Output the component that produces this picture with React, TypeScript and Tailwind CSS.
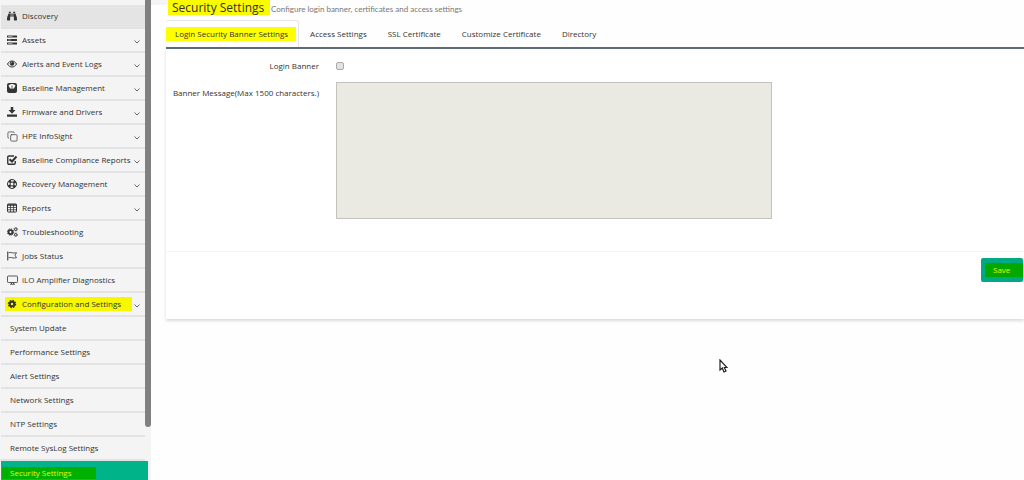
import { useState, type ReactNode } from "react";
import { FaBinoculars } from "react-icons/fa";
import { Copy } from "lucide-react";

type NavItem = {
  label: string;
  icon: ReactNode;
  expandable?: boolean;
};

function Icon({ children }: { children: ReactNode }) {
  return (
    <svg viewBox="0 0 20 20" width="10" height="10" fill="none" stroke="currentColor" strokeWidth="2" aria-hidden="true">
      {children}
    </svg>
  );
}

const icons = {
  server: (
    <Icon>
      <path d="M0 3h20M0 10h20M0 17h20" strokeWidth="4" />
      <path d="M2 3h9M2 10h6M2 17h9" stroke="#bbb" strokeWidth="1.5" />
    </Icon>
  ),
  eye: (
    <Icon>
      <path d="M1 10c4-8 14-8 18 0-4 8-14 8-18 0z" />
      <circle cx="10" cy="9" r="4.500" fill="currentColor" stroke="none" />
      <path d="M7.500 9c0-1.500 1-2.500 2.500-2.500" stroke="#ddd" strokeWidth="1.200" />
    </Icon>
  ),
  scale: (
    <Icon>
      <rect x="0" y="0" width="20" height="20" rx="4" fill="currentColor" stroke="none" />
      <path d="M3 5c4-4 10-4 14 0l-3 6H6z" fill="#f4f4f4" stroke="none" />
      <path d="M10 10V5" strokeWidth="1.500" />
    </Icon>
  ),
  download: (
    <Icon>
      <path d="M7.500 0h5v6h4.500l-7 7.500L3 6h4.500zM0 15h20v4.500H0z" fill="currentColor" stroke="none" />
    </Icon>
  ),
  check: (
    <Icon>
      <path d="M16.500 12v4q0 2.500-2.500 2.500H4Q1.500 18.500 1.500 16V4.500Q1.500 2 4 2h10" strokeWidth="2.800" />
      <path d="M5 8.500l5 4.500 9-10" strokeWidth="4" />
    </Icon>
  ),
  ring: (
    <Icon>
      <circle cx="10" cy="10" r="9" />
      <circle cx="10" cy="10" r="4" />
      <circle cx="10" cy="10" r="6.500" strokeWidth="5" strokeDasharray="5.200 5" strokeDashoffset="-2.500" />
    </Icon>
  ),
  table: (
    <Icon>
      <rect x="1" y="2" width="18" height="16" rx="1.500" />
      <path d="M1 4h18" strokeWidth="3" />
      <path d="M1 9h18M1 13.500h18M7 3v15M13 3v15" strokeWidth="1.500" />
    </Icon>
  ),
  cogs: (
    <svg viewBox="0 0 22 20" width="11" height="10" fill="none" stroke="currentColor" aria-hidden="true">
      <circle cx="7" cy="10" r="4" strokeWidth="3.500" />
      <circle cx="7" cy="10" r="6.300" strokeWidth="2" strokeDasharray="2.700 2.250" />
      <circle cx="17.500" cy="4.500" r="2.500" strokeWidth="2" />
      <circle cx="17.500" cy="4.500" r="4" strokeWidth="1" strokeDasharray="2 2.190" />
      <circle cx="17.500" cy="15.500" r="2.500" strokeWidth="2" />
      <circle cx="17.500" cy="15.500" r="4" strokeWidth="1" strokeDasharray="2 2.190" />
    </svg>
  ),
  flag: (
    <Icon>
      <path d="M1.500 1v18" />
      <path d="M3 3.500c5-2 8 2 16 0l-3 5 3 5c-8 2-11-2-16 0" strokeWidth="1.600" />
    </Icon>
  ),
  monitor: (
    <svg viewBox="0 0 22 20" width="11" height="10" fill="none" stroke="currentColor" strokeWidth="1.600" aria-hidden="true">
      <rect x="1" y="2" width="20" height="13" rx="1.500" />
      <path d="M9 15v3M13 15v3M6 18.500h10" />
    </svg>
  ),
  cog: (
    <Icon>
      <circle cx="10" cy="10" r="4.500" strokeWidth="4" />
      <circle cx="10" cy="10" r="7" strokeWidth="2.800" strokeDasharray="3 2.498" />
    </Icon>
  ),
};

const navItems: NavItem[] = [
  { label: "Discovery", icon: <FaBinoculars size={10} /> },
  { label: "Assets", icon: icons.server, expandable: true },
  { label: "Alerts and Event Logs", icon: icons.eye, expandable: true },
  { label: "Baseline Management", icon: icons.scale, expandable: true },
  { label: "Firmware and Drivers", icon: icons.download, expandable: true },
  { label: "HPE InfoSight", icon: <Copy size={11} strokeWidth={1.5} />, expandable: true },
  { label: "Baseline Compliance Reports", icon: icons.check, expandable: true },
  { label: "Recovery Management", icon: icons.ring, expandable: true },
  { label: "Reports", icon: icons.table, expandable: true },
  { label: "Troubleshooting", icon: icons.cogs },
  { label: "Jobs Status", icon: icons.flag },
  { label: "iLO Amplifier Diagnostics", icon: icons.monitor },
  { label: "Configuration and Settings", icon: icons.cog, expandable: true },
];

const subItems = [
  "System Update",
  "Performance Settings",
  "Alert Settings",
  "Network Settings",
  "NTP Settings",
  "Remote SysLog Settings",
  "Security Settings",
];

const tabs = [
  "Login Security Banner Settings",
  "Access Settings",
  "SSL Certificate",
  "Customize Certificate",
  "Directory",
];

function Chevron() {
  return (
    <svg viewBox="0 0 6 4" width="6" height="4" fill="none" stroke="#666" className="mt-[3px] ml-auto shrink-0">
      <path d="M.5 .5L3 3 5.500 .5" />
    </svg>
  );
}

function Sidebar() {
  return (
    <nav className="relative h-screen w-[151px] shrink-0 overflow-hidden bg-[#f4f4f4] pt-[5px] pl-px">
      <ul>
        {navItems.map((item) => {
          const hovered = item.label === "Discovery";
          const current = item.label === "Configuration and Settings";
          return (
            <li key={item.label} className="mr-[6px]">
              <button
                type="button"
                className={`flex h-6 w-full items-center border-b-2 border-[#e2e2e2] pr-[5px] pl-1 text-left ${
                  hovered ? "bg-[#e4e4e4]" : "bg-[#f4f4f4]"
                }`}
              >
                <span className={`flex h-[14px] items-center pl-[2px] ${current ? "w-[127px] bg-[#f7f700]" : ""}`}>
                  <span className="flex w-[15px] shrink-0 items-center">{item.icon}</span>
                  <span className="whitespace-nowrap">{item.label}</span>
                </span>
                {item.expandable && <Chevron />}
              </button>
            </li>
          );
        })}
        {subItems.map((label) => {
          const active = label === "Security Settings";
          return (
            <li key={label} className={active ? "relative z-10 mr-[3px]" : "mr-[6px]"}>
              <a
                href="#"
                className={`flex h-6 items-center ${
                  active ? "bg-[#00b388] pl-px text-[#e8f500]" : "border-b-2 border-[#e2e2e2] pl-[9px]"
                }`}
              >
                <span className={active ? "w-[94px] bg-[#00b000] pl-2" : ""}>{label}</span>
              </a>
            </li>
          );
        })}
      </ul>
      <div className="absolute top-0 right-0 h-[89%] w-[6px] rounded-b-full bg-[#808080]" />
    </nav>
  );
}

function BannerForm() {
  const [enabled, setEnabled] = useState(false);
  const [message, setMessage] = useState("");

  return (
    <form
      className="border-t-2 border-[#5d6b78] bg-white pb-[37px] shadow-[0_2px_3px_rgba(0,0,0,0.14)]"
      onSubmit={(e) => e.preventDefault()}
    >
      <div className="grid grid-cols-[153px_1fr] gap-x-[17px] pt-3 pb-8">
        <label htmlFor="login-banner" className="flex h-[10px] items-center justify-end">
          Login Banner
        </label>
        <input
          id="login-banner"
          type="checkbox"
          checked={enabled}
          onChange={(e) => setEnabled(e.target.checked)}
          className="size-2 appearance-none self-center rounded-[2px] border border-[#aaa] bg-[#e2e2e2] checked:bg-[#00b388]"
        />
        <label htmlFor="banner-message" className="mt-4 text-right whitespace-nowrap">
          Banner Message(Max 1500 characters.)
        </label>
        <textarea
          id="banner-message"
          maxLength={1500}
          disabled={!enabled}
          value={message}
          onChange={(e) => setMessage(e.target.value)}
          className="mt-[11px] h-[137px] w-[436px] max-w-full resize-none border border-[#c2c3be] bg-[#eaeae3] p-1"
        />
      </div>
      <div className="flex justify-end border-t border-[#f5f5f5] pt-[6px]">
        <button type="submit" className="mr-px flex h-6 w-[42px] items-center rounded-[2px] bg-[#00a984] pl-1 text-[#e2f500]">
          <span className="flex h-[14px] w-full items-center bg-[#00a800] pl-2">Save</span>
        </button>
      </div>
    </form>
  );
}

export default function App() {
  const [activeTab, setActiveTab] = useState(tabs[0]);

  return (
    <div className="flex min-h-screen bg-[#fefefe] font-['Open_Sans',sans-serif] text-[8px] leading-[12px] text-[#333]">
      <Sidebar />
      <main className="min-w-0 flex-1 bg-[linear-gradient(#f4f4f4,#f4f4f4)] bg-[length:17px_5px] bg-no-repeat pl-[15px]">
        <header className="flex h-5 items-start pl-[2px]">
          <h1 className="h-[15px] w-[102px] bg-[#fbfb00] pl-1 text-[12px] leading-[15px] whitespace-nowrap">
            Security Settings
          </h1>
          <p className="pt-[3px] pl-px font-['Lato',sans-serif] whitespace-nowrap text-[#777]">
            Configure login banner, certificates and access settings
          </p>
        </header>
        <div role="tablist" className="flex h-[27px] gap-px">
          {tabs.map((tab, i) => (
            <button
              key={tab}
              type="button"
              role="tab"
              aria-selected={tab === activeTab}
              onClick={() => setActiveTab(tab)}
              className={`flex items-center whitespace-nowrap ${
                tab === activeTab ? "rounded-t-[3px] border border-b-0 border-l-0 border-[#e5e5e5] bg-white" : ""
              } ${i === 0 ? "pr-[2px]" : "px-[10px]"}`}
            >
              <span className={i === 0 ? "bg-[#ffff00] py-px pr-2 pl-[9px]" : ""}>{tab}</span>
            </button>
          ))}
        </div>
        <BannerForm />
      </main>
      <svg className="pointer-events-none absolute top-[359px] left-[719px]" width="9" height="14" viewBox="0 0 9 14">
        <path d="M1 1v10l2.300-2 1.700 4 2-1-1.700-3.500H8z" fill="#fff" stroke="#222" strokeWidth="1.200" />
      </svg>
    </div>
  );
}
